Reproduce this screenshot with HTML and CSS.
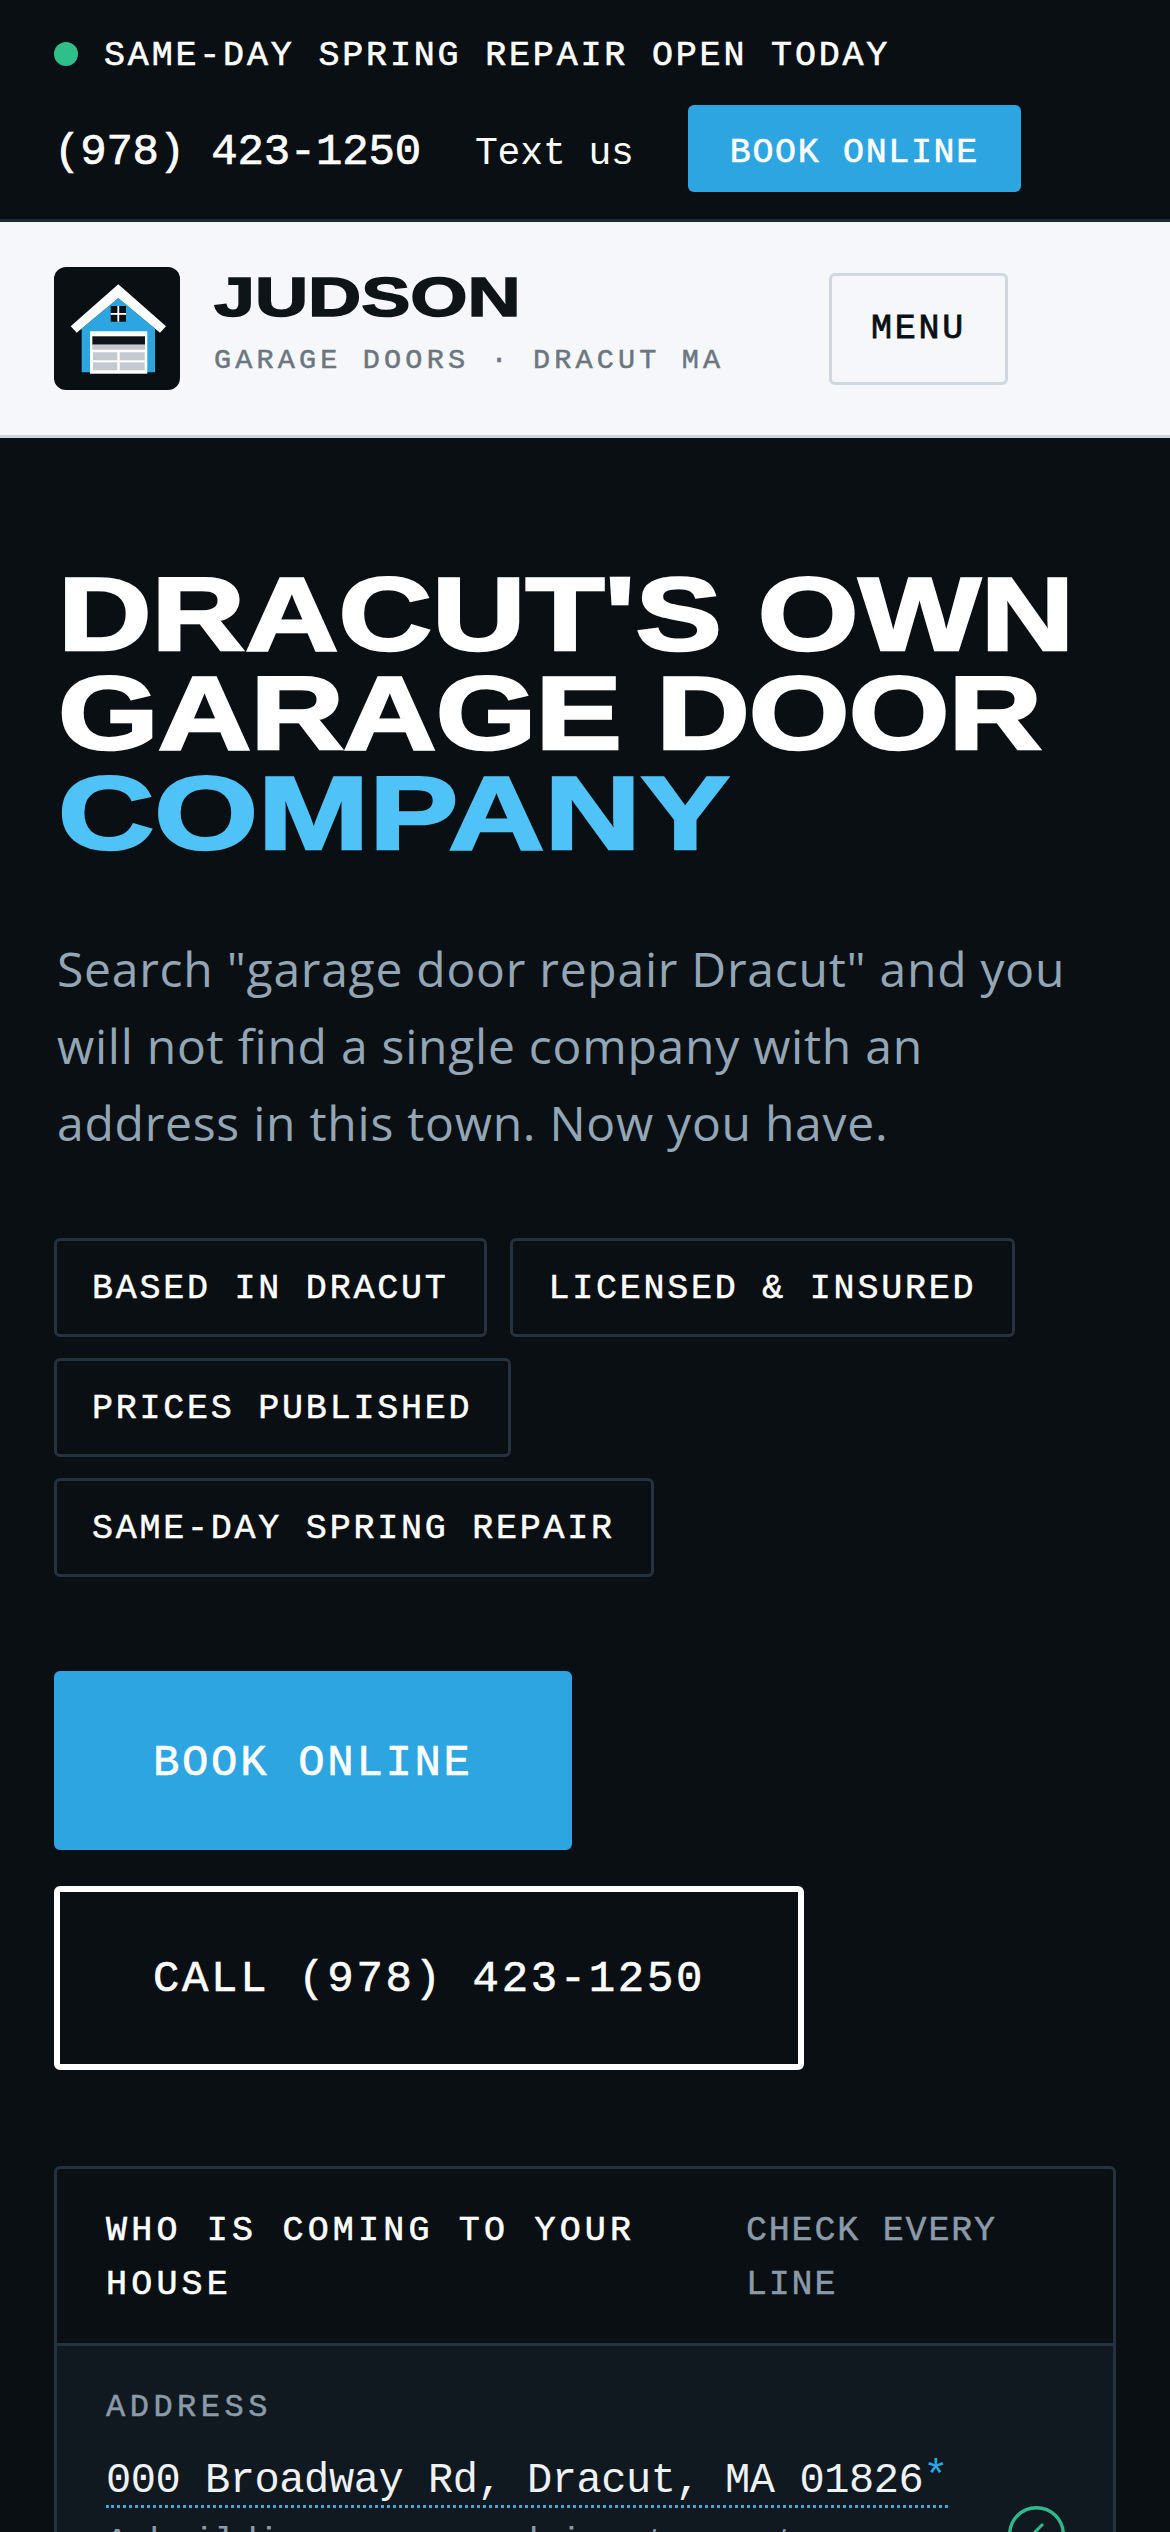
FILE: index.html
```html
<!DOCTYPE html>
<html lang="en">
<head>
    <meta charset="UTF-8">
    <meta name="viewport" content="width=device-width, initial-scale=1.0">
    <title>Judson Garage Doors</title>
    <link rel="stylesheet" href="styles.css">
</head>
<body>
    <div class="topbar">
        <div class="status">
            <span class="status-dot"></span>
            <span class="status-text">SAME-DAY SPRING REPAIR OPEN TODAY</span>
        </div>
        <div class="contact">
            <a class="phone">(978) 423-1250</a>
            <a class="text-us">Text us</a>
            <a class="book-small">BOOK ONLINE</a>
        </div>
    </div>
    <header class="site-header">
        <div class="logo">
            <svg viewBox="0 0 126 123" width="126" height="123">
                <polygon points="64.3,31 27.7,61.7 27.7,105.3 101,105.3 101,61.7" fill="#2ca5e0"/>
                <polygon points="64.3,17.3 16.7,59.3 22.7,65.7 64.3,31 106,65.7 112,59.3" fill="#fff"/>
                <rect x="56.7" y="39" width="15.3" height="15.7" fill="#0a0f13"/>
                <rect x="63.4" y="39" width="1.8" height="15.7" fill="#fff"/>
                <rect x="56.7" y="46" width="15.3" height="1.8" fill="#fff"/>
                <rect x="36" y="64.3" width="57.3" height="42.4" fill="#fff"/>
                <rect x="38.3" y="69.3" width="52.7" height="8.4" fill="#0f1419"/>
                <rect x="38.3" y="77.7" width="52.7" height="5" fill="#c4c9d0"/>
                <rect x="39" y="85.3" width="24.3" height="8" fill="#c4c9d0"/>
                <rect x="65.7" y="85.3" width="25" height="8" fill="#c4c9d0"/>
                <rect x="39" y="95.3" width="24.3" height="8" fill="#c4c9d0"/>
                <rect x="65.7" y="95.3" width="25" height="8" fill="#c4c9d0"/>
            </svg>
        </div>
        <div class="brand">
            <div class="brand-name">JUDSON</div>
            <div class="brand-sub">GARAGE DOORS · DRACUT MA</div>
        </div>
        <button class="menu-btn">MENU</button>
    </header>
    <section class="hero">
        <h1>DRACUT'S OWN<br><span class="tight">GARAGE DOOR</span><br><span class="accent">COMPANY</span></h1>
        <p class="lead">Search "garage door repair Dracut" and you will not find a single company with an address in this town. Now you have.</p>
        <div class="pills">
            <span class="pill">BASED IN DRACUT</span>
            <span class="pill">LICENSED &amp; INSURED</span>
            <span class="pill">PRICES PUBLISHED</span>
            <span class="pill">SAME-DAY SPRING REPAIR</span>
        </div>
        <div class="actions">
            <a class="btn btn-primary">BOOK ONLINE</a>
            <a class="btn btn-outline">CALL (978) 423-1250</a>
        </div>
        <div class="card">
            <div class="card-head">
                <div class="card-title">WHO IS COMING TO YOUR HOUSE</div>
                <div class="card-note">CHECK EVERY LINE</div>
            </div>
            <div class="card-row">
                <div class="row-text">
                    <div class="row-label">ADDRESS</div>
                    <div class="row-value"><span class="dotted">000 Broadway Rd, Dracut, MA 01826<sup class="star">*</sup></span></div>
                    <div class="row-desc">A building you can drive to, not a</div>
                </div>
                <svg class="check" viewBox="0 0 57 57" width="57" height="57">
                    <circle cx="28.5" cy="28.5" r="26.8" fill="none" stroke="#2fb88a" stroke-width="3.4"/>
                    <path d="M12 27l7 7L35 18" fill="none" stroke="#2fb88a" stroke-width="3"/>
                </svg>
            </div>
        </div>
    </section>
</body>
</html>
```

FILE: styles.css
```css
html, body {
    height: 2532px;
    overflow: hidden;
}
body {
    margin: 0;
    background-color: #0a0f13;
    color: #fff;
    font-family: "Liberation Mono", monospace;
}
a {
    color: inherit;
    text-decoration: none;
}

/* top bar */
.topbar {
    padding: 24px 54px 27px;
    border-bottom: 3px solid #1f2a36;
}
.status {
    display: flex;
    align-items: center;
    gap: 26px;
    height: 60px;
    font-size: 35px;
    letter-spacing: 2.82px;
    -webkit-text-stroke: .6px #fff;
}
.status-text {
    padding-top: 4px;
}
.status-dot {
    width: 24px;
    height: 24px;
    border-radius: 50%;
    background-color: #2fbf8a;
}
.contact {
    display: flex;
    align-items: center;
    gap: 54px;
    margin-top: 21px;
}
.phone {
    padding-top: 6px;
    font-size: 44px;
    letter-spacing: -.2px;
    -webkit-text-stroke: .7px #fff;
}
.text-us {
    padding-top: 10px;
    font-size: 38px;
    letter-spacing: -.1px;
}
.book-small {
    height: 87px;
    line-height: 97px;
    padding: 0 42px;
    border-radius: 6px;
    background-color: #2ca5e0;
    font-size: 35px;
    letter-spacing: 1.64px;
    -webkit-text-stroke: .6px #fff;
}

/* logo row */
.site-header {
    display: flex;
    align-items: center;
    padding: 45px 54px;
    background-color: #f5f7fa;
    border-bottom: 3px solid #d0d7de;
}
.logo {
    width: 126px;
    height: 123px;
    border-radius: 12px;
    background-color: #0a0f13;
}
.logo svg {
    display: block;
}
.brand {
    width: 505px;
    margin-left: 34px;
    padding-bottom: 11px;
    white-space: nowrap;
}
.brand-name {
    font-family: "Liberation Sans", sans-serif;
    font-weight: 700;
    font-size: 56px;
    line-height: 56px;
    color: #0f1419;
    transform: scaleX(1.314);
    transform-origin: left;
    -webkit-text-stroke: 1.5px #0f1419;
}
.brand-sub {
    margin-top: 19px;
    font-size: 28.5px;
    letter-spacing: 4.16px;
    color: #6b7680;
    -webkit-text-stroke: .5px #6b7680;
}
.menu-btn {
    width: 179px;
    height: 112px;
    margin-left: 110px;
    padding: 0;
    border: 3px solid #d0d7de;
    border-radius: 6px;
    background: none;
    font-family: inherit;
    font-size: 35px;
    letter-spacing: 2.76px;
    color: #0a0f13;
    -webkit-text-stroke: .8px #0a0f13;
}

/* hero */
.hero {
    padding: 0 54px;
}
h1 {
    margin: 127px 0 0 4px;
    width: 900px;
    font-family: "Liberation Sans", sans-serif;
    font-weight: 700;
    font-size: 104px;
    line-height: 99.4px;
    transform: scaleX(1.245);
    transform-origin: left;
    -webkit-text-stroke: 2.5px #fff;
}
.tight {
    letter-spacing: -.7px;
}
.accent {
    display: inline-block;
    color: #4fc3f7;
    transform: scaleX(1.03);
    transform-origin: left;
    -webkit-text-stroke: 2.5px #4fc3f7;
}
.lead {
    width: 1018px;
    margin: 67px 0 0;
    padding-left: 3px;
    font-family: "Open Sans", sans-serif;
    font-size: 48px;
    line-height: 77px;
    letter-spacing: .75px;
    color: #93a6b5;
}
.pills {
    display: flex;
    flex-wrap: wrap;
    gap: 21px 23px;
    margin-top: 77px;
}
.pill {
    height: 99px;
    line-height: 97px;
    box-sizing: border-box;
    padding: 0 36px 0 35px;
    border: 3px solid #263240;
    border-radius: 6px;
    font-size: 35px;
    letter-spacing: 2.76px;
    -webkit-text-stroke: .5px #fff;
}
.actions {
    display: flex;
    flex-direction: column;
    align-items: flex-start;
    gap: 36px;
    margin-top: 94px;
}
.btn {
    box-sizing: border-box;
    padding: 0 93px;
    border: 6px solid transparent;
    border-radius: 6px;
    font-size: 44px;
    letter-spacing: 2.65px;
    -webkit-text-stroke: .6px #fff;
}
.btn-primary {
    height: 179px;
    line-height: 173px;
    background-color: #2ca5e0;
    border-color: #2ca5e0;
}
.btn-outline {
    height: 184px;
    line-height: 175px;
    border-color: #fff;
}

/* card */
.card {
    margin-top: 96px;
    border: 3px solid #263240;
    border-radius: 6px;
}
.card-head {
    display: flex;
    padding: 35px 48px 31px 49px;
    border-bottom: 3px solid #263240;
    font-size: 35px;
    line-height: 54px;
}
.card-title {
    flex: 1;
    letter-spacing: 4.2px;
    -webkit-text-stroke: .6px #fff;
}
.card-note {
    width: 319px;
    letter-spacing: 1.8px;
    color: #8a9aa8;
    -webkit-text-stroke: .5px #8a9aa8;
}
.card-row {
    display: flex;
    justify-content: space-between;
    padding: 40px 48px 42px 49px;
    background-color: #111920;
}
.row-text {
    width: 860px;
}
.row-label {
    font-size: 32px;
    line-height: 44px;
    letter-spacing: 4.5px;
    color: #8a9aa8;
    -webkit-text-stroke: .5px #8a9aa8;
}
.row-value {
    margin-top: 24px;
    font-size: 42px;
    line-height: 54px;
    letter-spacing: -.44px;
    color: #eef2f6;
}
.dotted {
    border-bottom: 3px dotted #3ea6d8;
}
.star {
    font-size: 42px;
    line-height: 0;
    vertical-align: 3px;
    color: #2ca5e0;
}
.row-desc {
    margin-top: 8px;
    font-size: 37px;
    line-height: 54px;
    letter-spacing: -.6px;
    color: #8a9aa8;
}
.check {
    flex-shrink: 0;
    margin-top: 120px;
}
```
